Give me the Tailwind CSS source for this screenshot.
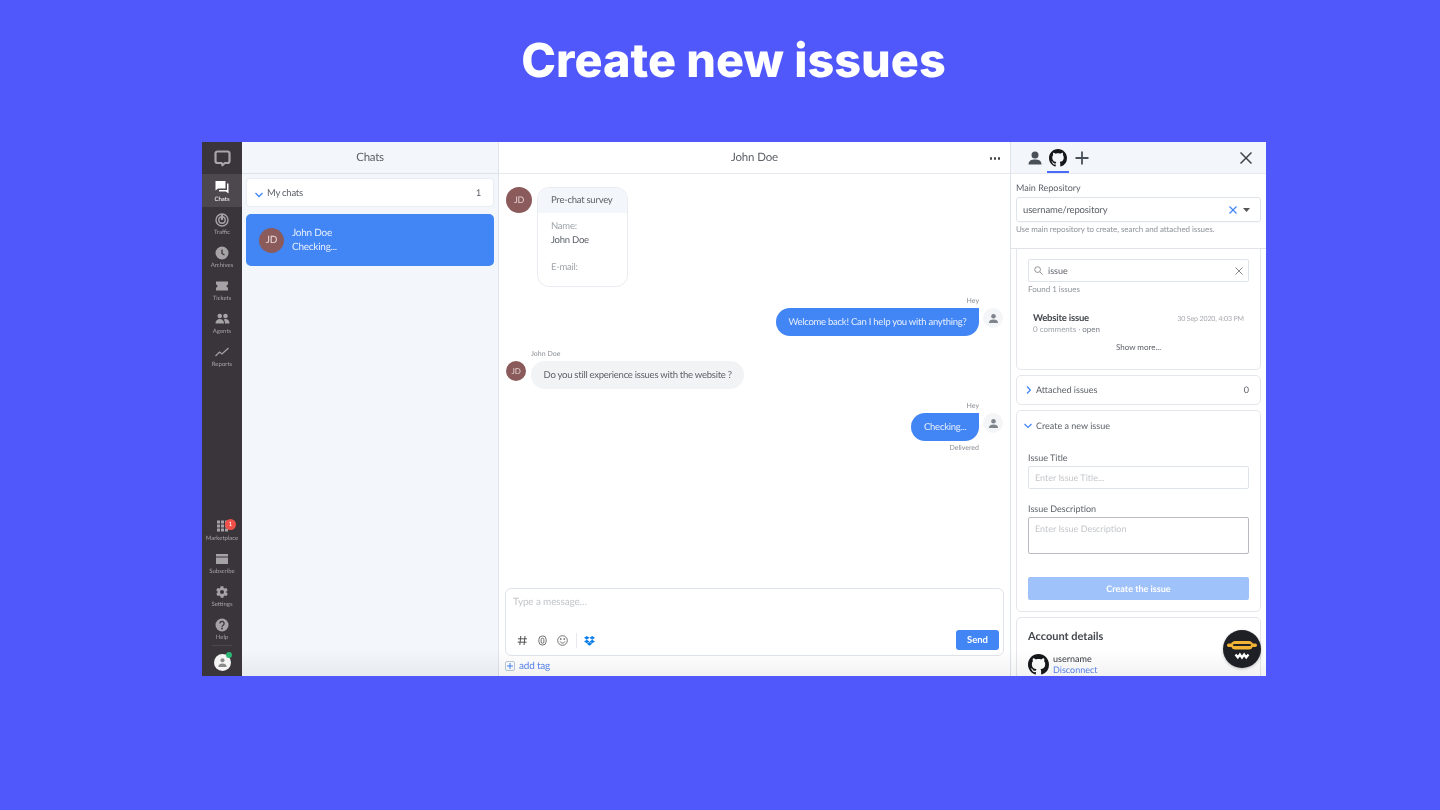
<!DOCTYPE html>
<html>
<head>
<meta charset="utf-8">
<script src="https://cdn.jsdelivr.net/npm/@tailwindcss/browser@4"></script>
</head>
<body class="m-0 bg-[#5158fb] font-['Lato',sans-serif] [text-rendering:geometricPrecision]">
<div class="w-[1440px] h-[810px] overflow-hidden bg-[#5158fb]">
  <div class="h-[142px] pt-[34px] pl-[27px] flex justify-center">
    <h1 class="font-['Inter',sans-serif] font-extrabold text-[46.8px] leading-[54px] text-white blur-[0.6px]">Create new issues</h1>
  </div>
  <div class="relative ml-[202px] w-[1064px] h-[534px] flex bg-white overflow-hidden text-[#4a4f57] blur-[0.35px]">
    <!-- Sidebar -->
    <nav class="w-[40px] shrink-0 bg-[#3a353a] flex flex-col text-[#a5a3a5] text-[6px] leading-[8px]">
      <div class="h-[32px] flex items-center justify-center">
        <svg width="17" height="17" viewBox="0 0 17 17" fill="none" stroke="#a8a6a8" stroke-width="2.2"><path d="M3.500 1.500h10a2 2 0 0 1 2 2v7.500a2 2 0 0 1-2 2h-2.600L8.500 15l-1-2H3.500a2 2 0 0 1-2-2V3.500a2 2 0 0 1 2-2z"/></svg>
      </div>
      <a class="h-[33px] bg-[#4d484d] text-white flex flex-col items-center pt-[6px]">
        <svg width="14" height="14" viewBox="0 0 14 14" fill="#fff"><path d="M0.500 1h10v7.500H3L.5 10.500z"/><path d="M12 3.500h1.500v10L11 11.500H4V10h8z"/></svg>
        <span class="mt-[2px]">Chats</span>
      </a>
      <a class="h-[33px] flex flex-col items-center pt-[6px]">
        <svg width="14" height="14" viewBox="0 0 14 14" fill="none" stroke="#a5a3a5" stroke-width="1.400"><circle cx="7" cy="7" r="6"/><circle cx="7" cy="7" r="3.200"/><path d="M7 1v6" stroke-width="2"/></svg>
        <span class="mt-[2px]">Traffic</span>
      </a>
      <a class="h-[33px] flex flex-col items-center pt-[6px]">
        <svg width="14" height="14" viewBox="0 0 14 14"><circle cx="7" cy="7" r="6.500" fill="#a5a3a5"/><path d="M7 3.500V7.500l2.500 1.500" stroke="#3a353a" stroke-width="1.300" fill="none"/></svg>
        <span class="mt-[2px]">Archives</span>
      </a>
      <a class="h-[33px] flex flex-col items-center pt-[6px]">
        <svg width="14" height="14" viewBox="0 0 14 14" fill="#a5a3a5"><path d="M1 2.500h12v3a1.500 1.500 0 0 0 0 3v3H1v-3a1.500 1.500 0 0 0 0-3z"/></svg>
        <span class="mt-[2px]">Tickets</span>
      </a>
      <a class="h-[33px] flex flex-col items-center pt-[6px]">
        <svg width="15" height="14" viewBox="0 0 15 14" fill="#a5a3a5"><circle cx="4.800" cy="4" r="2.300"/><circle cx="10.500" cy="4" r="2.300"/><path d="M.5 11.500c0-3 2-4.500 4.300-4.500s4.200 1.500 4.200 4.500z"/><path d="M10 11.500c0-1.600-.4-3-1.400-3.900.6-.4 1.200-.6 1.900-.6 2.300 0 4 1.500 4 4.500z"/></svg>
        <span class="mt-[2px]">Agents</span>
      </a>
      <a class="h-[33px] flex flex-col items-center pt-[6px]">
        <svg width="14" height="14" viewBox="0 0 14 14" fill="none" stroke="#a5a3a5" stroke-width="1.200"><path d="M.5 11l4-4 2.500 2L13.500 3"/></svg>
        <span class="mt-[2px]">Reports</span>
      </a>
      <div class="flex-1"></div>
      <a class="relative h-[33px] flex flex-col items-center pt-[6px]">
        <svg width="13" height="14" viewBox="0 0 13 13" fill="#a5a3a5"><rect x="1" y="1" width="3" height="3"/><rect x="5" y="1" width="3" height="3"/><rect x="9" y="1" width="3" height="3"/><rect x="1" y="5" width="3" height="3"/><rect x="5" y="5" width="3" height="3"/><rect x="9" y="5" width="3" height="3"/><rect x="1" y="9" width="3" height="3"/><rect x="5" y="9" width="3" height="3"/><rect x="9" y="9" width="3" height="3"/></svg>
        <span class="mt-[2px]">Marketplace</span>
        <span class="absolute left-[23px] top-[6px] w-[11px] h-[11px] rounded-full bg-[#f0504a] text-white text-[6px] leading-[11px] text-center">1</span>
      </a>
      <a class="h-[33px] flex flex-col items-center pt-[6px]">
        <svg width="14" height="14" viewBox="0 0 14 14" fill="#a5a3a5"><path d="M1 2h12v2.500H1z"/><path d="M1 5.500h12V12H1z"/></svg>
        <span class="mt-[2px]">Subscribe</span>
      </a>
      <a class="h-[33px] flex flex-col items-center pt-[6px]">
        <svg width="14" height="14" viewBox="0 0 24 24" fill="#a5a3a5"><path d="M19.400 13c0-.3.100-.7.100-1s0-.7-.1-1l2.100-1.600c.2-.2.200-.4.100-.6l-2-3.500c-.1-.2-.4-.3-.6-.2l-2.500 1c-.5-.4-1.100-.7-1.700-1l-.4-2.600c0-.3-.2-.4-.5-.4h-4c-.3 0-.5.100-.5.400l-.4 2.600c-.6.300-1.200.6-1.700 1l-2.500-1c-.2-.1-.5 0-.6.200l-2 3.500c-.1.200-.1.400.1.600L4.600 11c0 .3-.1.700-.1 1s0 .7.1 1l-2.100 1.600c-.2.200-.2.400-.1.600l2 3.500c.1.200.4.300.6.200l2.500-1c.5.400 1.100.7 1.700 1l.4 2.600c0 .3.200.4.500.4h4c.3 0 .5-.1.500-.4l.4-2.600c.6-.3 1.200-.6 1.700-1l2.500 1c.2.100.5 0 .6-.2l2-3.500c.1-.2.100-.4-.1-.6zM12 15.500a3.500 3.500 0 1 1 0-7 3.500 3.500 0 0 1 0 7z"/></svg>
        <span class="mt-[2px]">Settings</span>
      </a>
      <a class="h-[33px] flex flex-col items-center pt-[6px]">
        <svg width="14" height="14" viewBox="0 0 14 14"><circle cx="7" cy="7" r="6.500" fill="#a5a3a5"/><path d="M4.900 5.400a2.100 2.100 0 1 1 3.200 1.800c-.8.500-1.100.8-1.100 1.600" fill="none" stroke="#3a353a" stroke-width="1.300"/><circle cx="7" cy="10.500" r=".9" fill="#3a353a"/></svg>
        <span class="mt-[2px]">Help</span>
      </a>
      <div class="h-[31px] pt-[8px] flex justify-center border-t border-[#4d484d] mx-[10px]">
        <div class="relative w-[17px] h-[17px] rounded-full bg-[#f4f4f4] flex items-center justify-center">
          <svg width="11" height="11" viewBox="0 0 12 12" fill="#8a8a8a"><circle cx="6" cy="3.500" r="2.200"/><path d="M1.500 11c0-3 2-4 4.500-4s4.500 1 4.500 4z"/></svg>
          <span class="absolute right-[-1px] top-[-2px] w-[6px] h-[6px] rounded-full bg-[#2bb673]"></span>
        </div>
      </div>
    </nav>

    <!-- Chats list -->
    <section class="w-[257px] shrink-0 bg-[#f3f7fb] border-r border-[#dde3ea] flex flex-col tracking-[-0.25px]">
      <header class="h-[32px] pt-[1px] border-b border-[#dde3ea] flex items-center justify-center text-[11.5px] text-[#5d6168]">Chats</header>
      <div class="px-[4px] pt-[4px] flex flex-col gap-[7px]">
        <div class="h-[29px] bg-white border border-[#e8edf2] rounded-[4px] flex items-center pl-[8px] pr-[12px] pt-[4px] text-[9.5px] text-[#5d6168]">
          <svg width="8" height="6" viewBox="0 0 8 6" fill="none" stroke="#4285f4" stroke-width="1.300" class="mr-[4px]"><path d="M.5 1l3.500 3.500L7.500 1"/></svg>
          <span class="flex-1">My chats</span><span>1</span>
        </div>
        <div class="h-[52px] bg-[#4285f4] rounded-[5px] flex items-center pl-[13px] text-white">
          <div class="w-[25px] h-[25px] rounded-full bg-[#8b5a5a] text-[10px] flex items-center justify-center text-[#ecdcdc]">JD</div>
          <div class="ml-[8px] text-[10px] leading-[14px] text-[#e6efff]">
            <div>John Doe</div>
            <div>Checking...</div>
          </div>
        </div>
      </div>
    </section>

    <!-- Conversation -->
    <main class="w-[512px] shrink-0 border-r border-[#dde3ea] flex flex-col relative">
      <header class="h-[32px] shrink-0 border-b border-[#e6eaef] flex items-center justify-center text-[11.5px] tracking-[-0.15px] text-[#5d6168] relative">
        John Doe
        <span class="absolute right-[10px] top-[15px] flex gap-[1.500px]"><i class="block w-[2.500px] h-[2.500px] rounded-full bg-[#444]"></i><i class="block w-[2.500px] h-[2.500px] rounded-full bg-[#444]"></i><i class="block w-[2.500px] h-[2.500px] rounded-full bg-[#444]"></i></span>
      </header>
      <div class="flex-1 px-[7px] pt-[13px] text-[9.5px] tracking-[-0.25px] text-[#5d6168]">
        <!-- survey -->
        <div class="flex items-start gap-[5px]">
          <div class="w-[26px] h-[26px] rounded-full bg-[#8b5a5a] text-[#e4d3d3] text-[9px] flex items-center justify-center">JD</div>
          <div class="w-[91px] h-[100px] border border-[#e8ebef] rounded-[12px] overflow-hidden">
            <div class="h-[25px] pt-[2px] bg-[#f3f7fb] pl-[13px] flex items-center">Pre-chat survey</div>
            <div class="pl-[13px] pt-[6.5px] leading-[14px]">
              <div class="text-[#a0a4aa]">Name:</div>
              <div>John Doe</div>
              <div class="text-[#a0a4aa] mt-[13px]">E-mail:</div>
            </div>
          </div>
        </div>
        <!-- agent msg -->
        <div class="flex justify-end mt-[10px] gap-[4px]">
          <div class="flex flex-col items-end">
            <div class="text-[7px] leading-[9px] tracking-normal text-[#8a8e94] mb-[2px]">Hey</div>
            <div class="h-[28px] pt-[2px] bg-[#4285f4] text-[#e6efff] rounded-l-[14px] rounded-br-[14px] px-[12.500px] flex items-center">Welcome back! Can I help you with anything?</div>
          </div>
          <div class="w-[20px] h-[20px] rounded-full bg-[#f3f5f7] mt-[11px] flex items-center justify-center">
            <svg width="11" height="11" viewBox="0 0 12 12" fill="#7f858c"><circle cx="6" cy="3.500" r="2.500"/><path d="M1 11c0-3 2-4 5-4s5 1 5 4z"/></svg>
          </div>
        </div>
        <!-- visitor msg -->
        <div class="flex mt-[14px] gap-[5px]">
          <div class="w-[20px] h-[20px] rounded-full bg-[#8b5a5a] text-[#e4d3d3] text-[8px] flex items-center justify-center mt-[11px]">JD</div>
          <div class="flex flex-col">
            <div class="text-[7px] leading-[9px] tracking-normal text-[#8a8e94] mb-[2px]">John Doe</div>
            <div class="h-[28px] pt-[2px] bg-[#f2f3f5] rounded-[14px] px-[12.500px] flex items-center">Do you still experience issues with the website ?</div>
          </div>
        </div>
        <!-- agent msg 2 -->
        <div class="flex justify-end mt-[13px] gap-[4px]">
          <div class="flex flex-col items-end">
            <div class="text-[7px] leading-[9px] tracking-normal text-[#8a8e94] mb-[2px]">Hey</div>
            <div class="h-[28px] pt-[2px] bg-[#4285f4] text-[#e6efff] rounded-l-[14px] rounded-br-[14px] px-[12.500px] flex items-center">Checking...</div>
            <div class="text-[7px] leading-[9px] tracking-normal text-[#8a8e94] mt-[3px]">Delivered</div>
          </div>
          <div class="w-[20px] h-[20px] rounded-full bg-[#f3f5f7] mt-[11px] flex items-center justify-center">
            <svg width="11" height="11" viewBox="0 0 12 12" fill="#7f858c"><circle cx="6" cy="3.500" r="2.500"/><path d="M1 11c0-3 2-4 5-4s5 1 5 4z"/></svg>
          </div>
        </div>
      </div>
      <!-- composer -->
      <div class="px-[6px] shrink-0">
        <div class="h-[68px] border border-[#dfe4ea] rounded-[6px] px-[7px] pt-[7px] relative">
          <div class="text-[10px] leading-[13px] tracking-[-0.15px] text-[#c3c6ca]">Type a message…</div>
          <div class="absolute left-[11px] bottom-[7px] flex items-center h-[15px]">
            <svg width="11" height="11" viewBox="0 0 11 11" fill="none" stroke="#555" stroke-width="1"><path d="M3.800 1l-1 9M8 1l-1 9M1 3.800h9M.7 7.200h9"/></svg>
            <svg width="11" height="11" viewBox="0 0 12 12" fill="none" stroke="#666" stroke-width="1" class="ml-[9px]"><rect x="2" y="1" width="8" height="10" rx="4"/><rect x="4.500" y="3.500" width="3" height="5.500" rx="1.500"/></svg>
            <svg width="11" height="11" viewBox="0 0 11 11" fill="none" stroke="#666" stroke-width=".9" class="ml-[9px]"><circle cx="5.500" cy="5.500" r="4.800"/><path d="M3 6.500c.6 1 1.500 1.500 2.500 1.500s1.900-.5 2.500-1.500"/><circle cx="3.800" cy="4" r=".5" fill="#666"/><circle cx="7.200" cy="4" r=".5" fill="#666"/></svg>
            <span class="w-px h-[15px] bg-[#e6e9ee] ml-[8px]"></span>
            <svg width="11" height="10" viewBox="0 0 24 22" fill="#0d7fe8" class="ml-[7px]"><path d="M6 0l6 4-6 4-6-4zM18 0l6 4-6 4-6-4zM0 12l6-4 6 4-6 4zM18 8l6 4-6 4-6-4zM6 17.300l6-4 6 4-6 4z"/></svg>
          </div>
          <button class="absolute right-[4px] bottom-[5px] w-[43px] h-[20px] rounded-[3px] bg-[#4285f4] text-white text-[9.5px] font-bold">Send</button>
        </div>
      </div>
      <div class="h-[20px] shrink-0 px-[6px] flex items-center text-[10px] tracking-[-0.2px] text-[#5a86ee]">
        <span class="w-[10px] h-[10px] border border-[#b9c8dc] rounded-[2px] flex items-center justify-center mr-[4px]">
          <svg width="6" height="6" viewBox="0 0 6 6" stroke="#4285f4" stroke-width="1"><path d="M3 0v6M0 3h6"/></svg>
        </span>add tag
      </div>
    </main>

    <!-- Right panel -->
    <aside class="flex-1 min-w-0 bg-white flex flex-col text-[#5d6168]">
      <header class="h-[32px] shrink-0 bg-[#f3f7fb] border-b border-[#e6eaef] flex items-center relative">
        <svg width="14" height="14" viewBox="0 0 14 14" fill="#4a5058" class="ml-[17px]"><circle cx="7" cy="4" r="3.500"/><path d="M.5 13.500c0-3.700 2.800-5 6.500-5s6.500 1.300 6.500 5z"/></svg>
        <svg width="18" height="18" viewBox="0 0 16 16" fill="#16171a" class="ml-[7px]"><path d="M8 0C3.580 0 0 3.580 0 8c0 3.540 2.290 6.530 5.470 7.590.4.070.55-.17.550-.38 0-.19-.01-.82-.01-1.490-2.010.37-2.530-.49-2.690-.94-.09-.23-.48-.94-.82-1.130-.28-.15-.68-.52-.01-.53.630-.01 1.080.58 1.230.82.720 1.210 1.870.87 2.330.66.070-.52.280-.87.510-1.070-1.780-.2-3.640-.89-3.640-3.950 0-.87.310-1.590.820-2.150-.08-.2-.36-1.020.08-2.120 0 0 .67-.21 2.200.82.640-.18 1.320-.27 2-.27s1.360.09 2 .27c1.530-1.040 2.200-.82 2.200-.82.44 1.100.16 1.920.08 2.120.51.560.82 1.270.82 2.150 0 3.070-1.870 3.750-3.650 3.950.29.250.54.730.54 1.480 0 1.070-.01 1.930-.01 2.200 0 .21.150.46.550.38A8.010 8.010 0 0 0 16 8c0-4.420-3.580-8-8-8z"/></svg>
        <svg width="14" height="14" viewBox="0 0 14 14" stroke="#4a5058" stroke-width="1.800" class="ml-[8px]"><path d="M7 .5v13M.5 7h13"/></svg>
        <span class="absolute left-[36px] bottom-0 w-[22px] h-[2.500px] bg-[#4a6cf7]"></span>
        <svg width="12" height="12" viewBox="0 0 12 12" stroke="#3f444b" stroke-width="1.500" class="absolute right-[14px] top-[10px]"><path d="M.5.500l11 11M11.500.500l-11 11"/></svg>
      </header>
      <div class="h-[75px] shrink-0 border-b border-[#e0e3e7] px-[5px] pt-[9px]">
        <div class="text-[9px] leading-[10px] mb-[4px]">Main Repository</div>
        <div class="h-[25px] border border-[#dfe4ea] rounded-[3px] flex items-center pl-[6px] text-[9.5px] shadow-[0_1px_1px_rgba(0,0,0,0.03)]">
          <span class="flex-1 pt-[3px] tracking-[-0.15px]">username/repository</span>
          <svg width="8" height="8" viewBox="0 0 8 8" stroke="#4285f4" stroke-width="1.200" class="mr-[6px]"><path d="M.5.500l7 7M7.500.500l-7 7"/></svg>
          <svg width="7" height="4" viewBox="0 0 7 4" fill="#555" class="mr-[10px]"><path d="M0 0h7L3.500 4z"/></svg>
        </div>
        <div class="text-[8px] leading-[10px] tracking-[-0.07px] text-[#8f9399] mt-[2px]">Use main repository to create, search and attached issues.</div>
      </div>
      <div class="flex-1 px-[5px] flex flex-col gap-[5px] min-h-0">
        <!-- search card -->
        <div class="h-[121px] shrink-0 border border-t-0 border-[#e3e6ea] rounded-b-[5px] px-[11px] pt-[10px]">
          <div class="h-[23px] border border-[#dfe4ea] rounded-[2px] flex items-center pl-[5px] pr-[5px] text-[9px]">
            <svg width="9" height="9" viewBox="0 0 10 10" fill="none" stroke="#888" stroke-width="1" class="mr-[5px]"><circle cx="4" cy="4" r="3.200"/><path d="M6.500 6.500L9.500 9.500"/></svg>
            <span class="flex-1">issue</span>
            <svg width="8" height="8" viewBox="0 0 8 8" stroke="#888" stroke-width="1"><path d="M.5.500l7 7M7.500.500l-7 7"/></svg>
          </div>
          <div class="text-[8px] leading-[10px] text-[#8f9399] mt-[2px]">Found 1 issues</div>
          <div class="flex items-center justify-between mt-[19px] pl-[5px] pr-[5px]">
            <span class="text-[9.5px] leading-[12px] font-bold tracking-[-0.2px] text-[#45484e]">Website issue</span>
            <span class="text-[7px] tracking-[-0.12px] text-[#a8abb0]">30 Sep 2020, 4:03 PM</span>
          </div>
          <div class="pl-[5px] -mt-[1px] text-[8px] leading-[10px] text-[#a0a4aa]">0 comments · <span class="text-[#7a7e85]">open</span></div>
          <div class="text-center text-[8px] leading-[10px] mt-[8px]">Show more...</div>
        </div>
        <!-- attached -->
        <div class="h-[30px] shrink-0 border border-[#e3e6ea] rounded-[5px] flex items-center pl-[9px] pr-[11px] text-[9px]">
          <svg width="5" height="8" viewBox="0 0 5 8" fill="none" stroke="#4285f4" stroke-width="1.200" class="mr-[5px]"><path d="M1 .5L4.300 4 1 7.500"/></svg>
          <span class="flex-1">Attached issues</span><span>0</span>
        </div>
        <!-- create -->
        <div class="h-[202px] shrink-0 border border-[#e3e6ea] rounded-[5px] px-[11px] text-[9px]">
          <div class="h-[30px] flex items-center -ml-[4px]">
            <svg width="8" height="6" viewBox="0 0 8 6" fill="none" stroke="#4285f4" stroke-width="1.200" class="mr-[4px]"><path d="M.5 1l3.500 3.500L7.500 1"/></svg>
            Create a new issue
          </div>
          <div class="leading-[11px] mt-[11px] mb-[3px]">Issue Title</div>
          <div class="h-[23px] border border-[#dfe4ea] rounded-[2px] pl-[6px] flex items-center text-[#c3c6ca]">Enter Issue Title...</div>
          <div class="leading-[11px] mt-[14px] mb-[3px]">Issue Description</div>
          <div class="h-[37px] border border-[#b8bcc2] rounded-[2px] pl-[6px] pt-[5px] text-[#c3c6ca] leading-[12px]">Enter Issue Description</div>
          <div class="h-[23px] mt-[23px] rounded-[2px] bg-[#a0c2fb] text-white flex items-center justify-center font-bold">Create the issue</div>
        </div>
        <!-- account -->
        <div class="h-[80px] shrink-0 border border-[#e3e6ea] rounded-[5px] px-[11px] pt-[12px]">
          <div class="text-[11px] leading-[14px] font-bold text-[#45484e]">Account details</div>
          <div class="flex items-center mt-[9px]">
            <svg width="21" height="21" viewBox="0 0 16 16" fill="#16171a"><path d="M8 0C3.580 0 0 3.580 0 8c0 3.540 2.290 6.530 5.470 7.590.4.070.55-.17.550-.38 0-.19-.01-.82-.01-1.490-2.010.37-2.530-.49-2.690-.94-.09-.23-.48-.94-.82-1.130-.28-.15-.68-.52-.01-.53.630-.01 1.080.58 1.230.82.720 1.210 1.870.87 2.330.66.070-.52.280-.87.510-1.070-1.780-.2-3.640-.89-3.640-3.950 0-.87.310-1.590.820-2.150-.08-.2-.36-1.020.08-2.120 0 0 .67-.21 2.200.82.640-.18 1.320-.27 2-.27s1.360.09 2 .27c1.530-1.040 2.200-.82 2.200-.82.44 1.100.16 1.920.08 2.120.51.560.82 1.270.82 2.150 0 3.070-1.870 3.750-3.650 3.950.29.250.54.730.54 1.480 0 1.070-.01 1.930-.01 2.200 0 .21.150.46.550.38A8.010 8.010 0 0 0 16 8c0-4.420-3.580-8-8-8z"/></svg>
            <div class="ml-[4px] text-[9px] leading-[11px]">
              <div class="font-medium text-[#45484e]">username</div>
              <div class="text-[#5a86ee]">Disconnect</div>
            </div>
          </div>
        </div>
      </div>
    </aside>

    <!-- bottom fade -->
    <div class="absolute left-[40px] right-0 bottom-0 h-[26px] bg-gradient-to-b from-transparent to-black/[0.05] pointer-events-none"></div>

    <!-- floating widget -->
    <div class="absolute right-[5px] bottom-[8px] w-[38px] h-[38px] rounded-full bg-[#1f1f26] flex items-center justify-center shadow-[0_1px_3px_rgba(0,0,0,0.25)]">
      <svg width="32" height="26" viewBox="0 0 32 26">
        <rect x="1" y="7.500" width="30" height="3.500" rx="1.700" fill="#f2b233"/>
        <rect x="5" y="5" width="22" height="8.500" rx="4.200" fill="#f2b233"/>
        <rect x="7" y="8" width="18" height="2" rx="1" fill="#1f1f26"/>
        <path d="M9.500 18.500l2.300 3 2.100-3 2.100 3 2.100-3 2.100 3 2.300-3" fill="none" stroke="#fff" stroke-width="2.200"/>
      </svg>
    </div>
  </div>
</div>
</body>
</html>
